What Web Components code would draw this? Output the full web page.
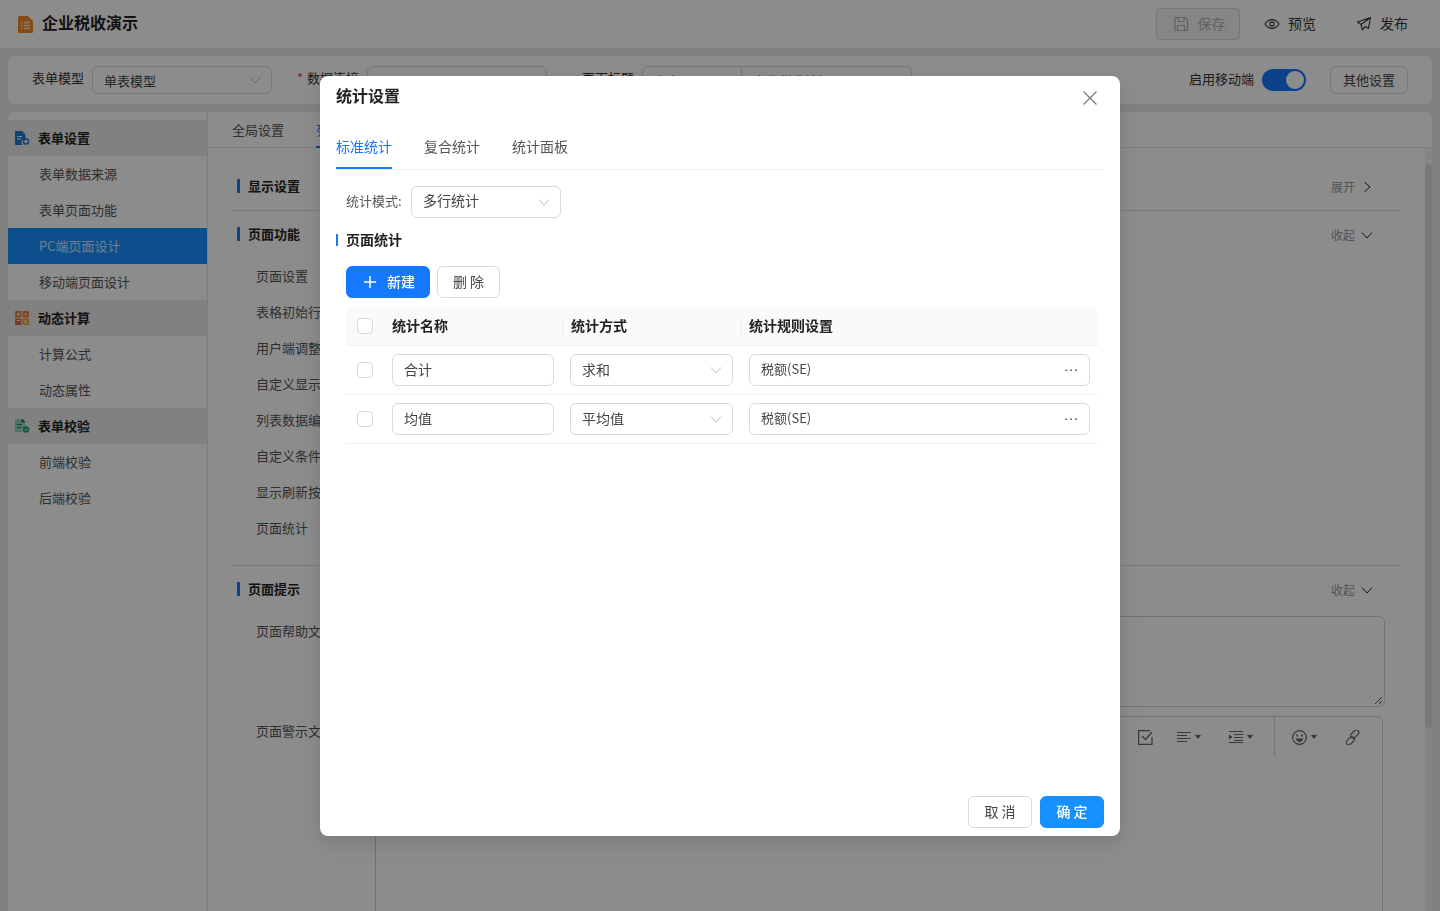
<!DOCTYPE html>
<html lang="zh-CN">
<head>
<meta charset="utf-8">
<title>统计设置</title>
<style>
  html, body { margin: 0; height: 100%; overflow: hidden; }
  body {
    background: #ebebeb;
    color: #333;
    font: 13px/20px "Noto Sans CJK SC", "Noto Sans", sans-serif;
  }
</style>
</head>
<body>
<design-page>
  <app-header slot="header" title="企业税收演示"></app-header>
  <form-toolbar slot="toolbar"></form-toolbar>
  <side-nav slot="nav">
    <nav-group label="表单设置" icon="doc"></nav-group>
    <nav-item>表单数据来源</nav-item>
    <nav-item>表单页面功能</nav-item>
    <nav-item active>PC端页面设计</nav-item>
    <nav-item>移动端页面设计</nav-item>
    <nav-group label="动态计算" icon="calc"></nav-group>
    <nav-item>计算公式</nav-item>
    <nav-item>动态属性</nav-item>
    <nav-group label="表单校验" icon="check"></nav-group>
    <nav-item>前端校验</nav-item>
    <nav-item>后端校验</nav-item>
  </side-nav>
  <design-panel slot="panel">
    <panel-section label="显示设置" toggle="展开" collapsed></panel-section>
    <panel-section label="页面功能" toggle="收起">
      <field-row>页面设置</field-row>
      <field-row>表格初始行数</field-row>
      <field-row>用户端调整列宽</field-row>
      <field-row>自定义显示列</field-row>
      <field-row>列表数据编辑</field-row>
      <field-row>自定义条件查询</field-row>
      <field-row>显示刷新按钮</field-row>
      <field-row>页面统计</field-row>
    </panel-section>
    <panel-section label="页面提示" toggle="收起" last>
      <help-editors></help-editors>
    </panel-section>
  </design-panel>
</design-page>

<stat-dialog title="统计设置">
  <stat-row name="合计" method="求和" rule="税额(SE)"></stat-row>
  <stat-row name="均值" method="平均值" rule="税额(SE)"></stat-row>
</stat-dialog>

<script>
'use strict';

const CHEVRON = `<svg width="12" height="12" viewBox="0 0 12 12" fill="none" stroke="currentColor" stroke-width="1"><path d="M1 3.500 6 9l5-5.500"/></svg>`;

class DesignPage extends HTMLElement {
  constructor() {
    super();
    this.attachShadow({ mode: 'open' }).innerHTML = `
<style>
  :host { display: flex; flex-direction: column; height: 911px; overflow: hidden; }
  .main { flex: 1; min-height: 0; display: flex; margin: 8px 8px 0; background: #fff; border-radius: 8px 8px 0 0; overflow: hidden; }
</style>
<slot name="header"></slot>
<slot name="toolbar"></slot>
<div class="main">
  <slot name="nav"></slot>
  <slot name="panel"></slot>
</div>`;
  }
}

class AppHeader extends HTMLElement {
  constructor() {
    super();
    this.attachShadow({ mode: 'open' }).innerHTML = `
<style>
  :host { display: flex; align-items: center; height: 48px; padding: 0 32px 0 18px; background: #fff; }
  svg { display: block; flex: none; }
  .title { margin: 0 0 4px 9px; font-size: 16px; font-weight: 700; color: #222; }
  .actions { margin-left: auto; display: flex; align-items: center; font-size: 14px; }
  .txt { margin-bottom: 2px; }
  .save { display: flex; align-items: center; justify-content: center; gap: 9px; box-sizing: border-box; width: 84px; height: 32px; padding-left: 2px; border: 1px solid #d9d9d9; border-radius: 4px; background: #f5f5f5; color: #b0b0b0; }
  .link { display: flex; align-items: center; gap: 8px; color: #333; }
  .preview { margin-left: 24px; }
  .publish { margin-left: 40px; }
</style>
<svg width="15" height="17" viewBox="0 0 15 17"><path fill="#f08a24" d="M1.500 0H10l5 5v10.500a1.500 1.500 0 0 1-1.500 1.500h-12A1.500 1.500 0 0 1 0 15.500v-14A1.500 1.500 0 0 1 1.500 0z"/><path stroke="#fff" stroke-opacity=".75" stroke-width="1.300" d="M3 6.500h1.500M6 6.500h6M3 9.500h1.500M6 9.500h6M3 12.500h1.500M6 12.500h6"/></svg>
<span class="title"></span>
<div class="actions">
  <span class="save">
    <svg width="16" height="16" viewBox="0 0 16 16" fill="none" stroke="currentColor" stroke-width="1.200"><path d="M2 1.500h10L14.500 4v10.500h-12.500z"/><path d="M5 1.500v4h6v-4M4.500 14.500V9.500h7v5"/></svg>
    <span class="txt">保存</span>
  </span>
  <span class="link preview">
    <svg width="16" height="16" viewBox="0 0 16 16" fill="none" stroke="#333" stroke-width="1.100"><path d="M1 8c1.800-3 4-4.400 7-4.400s5.200 1.400 7 4.400c-1.800 3-4 4.400-7 4.400S2.800 11 1 8z"/><circle cx="8" cy="8" r="2.100"/></svg>
    <span class="txt">预览</span>
  </span>
  <span class="link publish">
    <svg width="16" height="16" viewBox="0 0 16 16" fill="none" stroke="#333" stroke-width="1.100" stroke-linejoin="round"><path d="M14.500 1.500 1.500 6 5 8.500 6.500 14 9 10.500l3.500 2zM5 8.500l9.500-7"/></svg>
    <span class="txt">发布</span>
  </span>
</div>`;
  }
  connectedCallback() {
    this.shadowRoot.querySelector('.title').textContent = this.getAttribute('title');
  }
}

class UiSelect extends HTMLElement {
  constructor() {
    super();
    this.attachShadow({ mode: 'open' }).innerHTML = `
<style>
  :host { display: flex; align-items: center; justify-content: space-between; box-sizing: border-box; height: 32px; padding: 0 10px 0 11px; background: #fff; border: 1px solid #d9d9d9; border-radius: 6px; font-size: 14px; color: #444; }
  :host([small]) { height: 28px; font-size: 13px; }
  :host([dots]) { font-size: 13px; }
  .txt { margin-bottom: var(--txt-lift, 2px); }
  :host([small]) .txt { margin: 2px 0 0; }
  svg { display: block; color: #bfbfbf; flex: none; }
  :host([dots]) svg { display: none; }
  .dots { display: none; color: #333; letter-spacing: 1px; font-size: 14px; line-height: 14px; font-family: "Liberation Sans", sans-serif; margin: -9px 0 0; }
  :host([dots]) .dots { display: block; }
</style>
<span class="txt"><slot></slot></span>${CHEVRON}<span class="dots">...</span>`;
  }
}

class UiButton extends HTMLElement {
  constructor() {
    super();
    this.attachShadow({ mode: 'open' }).innerHTML = `
<style>
  :host { display: inline-flex; align-items: center; justify-content: center; box-sizing: border-box; height: 32px; padding-bottom: 2px; border: 1px solid #d9d9d9; border-radius: 6px; background: #fff; color: #444; font-size: 14px; }
  :host([size="small"]) { height: 28px; padding-bottom: 0; font-size: 13px; }
  :host([type="primary"]) { background: #1677ff; border-color: #1677ff; color: #fff; font-weight: 500; }
  :host([type="confirm"]) { background: #1890ff; border-color: #1890ff; color: #fff; font-weight: 500; }
</style>
<slot></slot>`;
  }
}

class FormToolbar extends HTMLElement {
  constructor() {
    super();
    this.attachShadow({ mode: 'open' }).innerHTML = `
<style>
  :host { display: flex; align-items: center; height: 48px; margin: 8px 8px 0; padding: 0 24px; background: #fff; border-radius: 8px; font-size: 13px; color: #333; }
  ui-select { width: 180px; }
  .lab { margin-bottom: 4px; }
  .req { color: #e5484d; margin: 0 0 4px 25px; width: 10px; }
  .lab2 { margin-left: 8px; }
  .lab3 { margin-left: 35px; }
  .pair { display: flex; margin-left: 8px; }
  .pair ui-select:first-child { width: 100px; border-radius: 6px 0 0 6px; }
  .pair ui-select:last-child { width: 170px; border-left: 0; border-radius: 0 6px 6px 0; }
  .gap { margin-left: 8px; }
  .right { margin-left: auto; display: flex; align-items: center; }
  .right .lab { margin-bottom: 2px; }
  .switch { width: 44px; height: 22px; margin: 0 24px 0 8px; border-radius: 11px; background: #1677ff; position: relative; }
  .switch::after { content: ""; position: absolute; top: 2px; right: 2px; width: 18px; height: 18px; border-radius: 50%; background: #fff; }
</style>
<span class="lab">表单模型</span>
<ui-select small class="gap">单表模型</ui-select>
<span class="req">*</span><span class="lab">数据连接</span>
<ui-select small class="lab2">master</ui-select>
<span class="lab lab3">页面标题</span>
<div class="pair">
  <ui-select small>中文</ui-select>
  <ui-select small>企业税收填报</ui-select>
</div>
<div class="right">
  <span class="lab">启用移动端</span>
  <span class="switch"></span>
  <ui-button size="small" style="width:78px">其他设置</ui-button>
</div>`;
  }
}

class SideNav extends HTMLElement {
  constructor() {
    super();
    this.attachShadow({ mode: 'open' }).innerHTML = `
<style>
  :host { display: block; flex: none; box-sizing: border-box; width: 200px; padding-top: 8px; border-right: 1px solid #e5e5e5; }
</style>
<slot></slot>`;
  }
}

const GROUP_ICONS = {
  doc: `<svg width="15" height="14" viewBox="0 0 15 14"><path fill="#1e78d2" d="M0 .8C0 .3.300 0 .8 0H7l3.500 3.500V8a3.500 3.500 0 0 0-3 6H.8c-.5 0-.8-.3-.8-.8z"/><path stroke="#fff" d="M2 5.500h5M2 8h4"/><circle cx="11" cy="10.500" r="2.500" fill="none" stroke="#1e78d2" stroke-width="1.400"/></svg>`,
  calc: `<svg width="14" height="14" viewBox="0 0 14 14"><rect width="6.500" height="6.500" rx=".8" fill="#e4813c"/><rect x="7.500" width="6.500" height="6.500" rx=".8" fill="#e4813c"/><rect y="7.500" width="6.500" height="6.500" rx=".8" fill="#dd6a4a"/><rect x="7.500" y="7.500" width="6.500" height="6.500" rx=".8" fill="#f09a1e"/><path stroke="#fff" d="M1.800 3.250h3M3.300 1.800v3M9.300 3.250h3M9.300 10h3M9.300 12h3M1.800 9.500l3 0"/></svg>`,
  check: `<svg width="15" height="14" viewBox="0 0 15 14"><path fill="#8fd2bd" d="M0 0h7l3 3v5a3.500 3.500 0 0 0-2.700 5H0z"/><path stroke="#14916e" d="M2 5.500h5M2 8.500h4M7 0v3h3"/><circle cx="11" cy="10.500" r="3.200" fill="#14a37c"/><path stroke="#fff" fill="none" d="m9.500 10.500 1.200 1.200 2-2"/></svg>`
};

class NavGroup extends HTMLElement {
  constructor() {
    super();
    this.attachShadow({ mode: 'open' }).innerHTML = `
<style>
  :host { display: flex; align-items: center; gap: 9px; height: 36px; padding-left: 7px; background: #ececec; font-weight: 700; color: #222; }
  .icon { display: flex; width: 14px; }
  svg { display: block; flex: none; }
</style>
<span class="icon"></span><span class="label"></span>`;
  }
  connectedCallback() {
    this.shadowRoot.querySelector('.icon').innerHTML = GROUP_ICONS[this.getAttribute('icon')];
    this.shadowRoot.querySelector('.label').textContent = this.getAttribute('label');
  }
}

class NavItem extends HTMLElement {
  constructor() {
    super();
    this.attachShadow({ mode: 'open' }).innerHTML = `
<style>
  :host { display: flex; align-items: center; height: 36px; padding-left: 31px; padding-bottom: 1px; box-sizing: border-box; color: #555; }
  :host([active]) { background: #1890ff; color: #cfe6ff; }
</style>
<slot></slot>`;
  }
}

class DesignPanel extends HTMLElement {
  constructor() {
    super();
    this.attachShadow({ mode: 'open' }).innerHTML = `
<style>
  :host { flex: 1; min-width: 0; display: flex; flex-direction: column; }
  .tabs { flex: none; display: flex; gap: 32px; box-sizing: border-box; height: 36px; padding-left: 24px; border-bottom: 1px solid #e8e8e8; color: #555; }
  .tabs span { box-sizing: border-box; height: 36px; line-height: 36px; }
  .tabs .on { color: #1677ff; border-bottom: 2px solid #1677ff; }
  .wrap { flex: 1; min-height: 0; display: flex; }
  .body { flex: 1; min-width: 0; padding: 15px 25px 0 24px; }
  .track { flex: none; width: 7px; background: #f2f2f2; }
  .thumb { margin-top: 16px; height: 564px; border-radius: 4px; background: #dcdcdf; }
</style>
<div class="tabs"><span>全局设置</span><span class="on">列表设置</span></div>
<div class="wrap">
  <div class="body"><slot></slot></div>
  <div class="track"><div class="thumb"></div></div>
</div>`;
  }
}

class PanelSection extends HTMLElement {
  constructor() {
    super();
    this.attachShadow({ mode: 'open' }).innerHTML = `
<style>
  :host { display: block; border-bottom: 1px solid #ddd; }
  :host([last]) { border-bottom: 0; }
  .head { display: flex; align-items: center; height: 45px; padding: 0 27px 0 5px; }
  :host([collapsed]) .head { height: 46px; padding-bottom: 1px; }
  .bar { width: 3px; height: 14px; background: #1677ff; margin-right: 8px; }
  .label { font-weight: 700; color: #222; }
  .toggle { margin: 2px 0 0 auto; display: flex; align-items: center; gap: 6px; font-size: 12px; color: #999; }
  .toggle svg { display: block; color: #222; }
  :host([collapsed]) .toggle svg { transform: rotate(-90deg); }
  .content { padding: 3px 0 18px; }
  :host([collapsed]) .content { display: none; }
  :host([last]) .content { padding: 0; }
</style>
<div class="head"><span class="bar"></span><span class="label"></span><span class="toggle"><span class="t"></span>${CHEVRON}</span></div>
<div class="content"><slot></slot></div>`;
  }
  connectedCallback() {
    this.shadowRoot.querySelector('.label').textContent = this.getAttribute('label');
    this.shadowRoot.querySelector('.t').textContent = this.getAttribute('toggle');
  }
}

class FieldRow extends HTMLElement {
  constructor() {
    super();
    this.attachShadow({ mode: 'open' }).innerHTML = `
<style>
  :host { display: flex; align-items: center; box-sizing: border-box; height: 36px; padding: 0 0 2px 24px; color: #555; }
</style>
<slot></slot>`;
  }
}

class HelpEditors extends HTMLElement {
  constructor() {
    super();
    this.attachShadow({ mode: 'open' }).innerHTML = `
<style>
  :host { display: grid; grid-template-columns: 143px 1fr; row-gap: 9px; margin-top: 5px; color: #555; }
  .lab { padding: 5px 0 0 24px; white-space: nowrap; overflow: hidden; }
  .area { position: relative; box-sizing: border-box; width: 1010px; height: 91px; border: 1px solid #d0d0d0; border-radius: 6px; }
  .grip { position: absolute; right: 1px; bottom: 1px; display: block; }
  .editor { box-sizing: border-box; width: 1008px; height: 400px; border: 1px solid #d0d0d0; border-radius: 6px; }
  .tools { display: flex; justify-content: flex-end; height: 40px; align-items: center; color: #666; }
  .tools svg { display: block; flex: none; }
  .caret { width: 0; height: 0; margin-left: 4px; border: 3px solid transparent; border-top: 4px solid #666; border-bottom: 0; }
  .tool { display: flex; align-items: center; }
  .sep { width: 1px; height: 40px; background: #d8d8d8; }
</style>
<div class="lab">页面帮助文本</div>
<div class="area"><svg class="grip" width="9" height="9" viewBox="0 0 9 9" stroke="#555" fill="none"><path d="M1 8 8 1M5 8l3-3"/></svg></div>
<div class="lab">页面警示文本</div>
<div class="editor">
  <div class="tools">
    <span class="tool"><svg width="15" height="15" viewBox="0 0 15 15" fill="none" stroke="currentColor" stroke-width="1.200"><path d="M14 7v7.400H.6V.6H12"/><path d="m4 6 3.500 3.500L14 2"/></svg></span>
    <span class="tool" style="margin-left:24px"><svg width="14" height="12" viewBox="0 0 14 12" stroke="currentColor"><path d="M0 1.500h14M0 4.500h10M0 7.500h14M0 10.500h10"/></svg><i class="caret"></i></span>
    <span class="tool" style="margin-left:28px"><svg width="14" height="12" viewBox="0 0 14 12" stroke="currentColor"><path d="M0 .5h14M5 3.500h9M5 6.500h9M5 9.500h9M0 11.500h14"/><path d="M0 3.500v5l3.500-2.500z" fill="currentColor" stroke="none"/></svg><i class="caret"></i></span>
    <span class="sep" style="margin-left:21px"></span>
    <span class="tool" style="margin-left:17px"><svg width="15" height="15" viewBox="0 0 15 15" fill="none" stroke="currentColor" stroke-width="1.200"><circle cx="7.500" cy="7.500" r="6.800"/><path d="M5 4.500v2M10 4.500v2" stroke-width="1.600"/><path d="M3.800 8.500h7.400c-.4 2.200-2 3.500-3.700 3.500s-3.300-1.300-3.700-3.500z" fill="currentColor" stroke="none"/></svg><i class="caret"></i></span>
    <span class="tool" style="margin-left:28px;margin-right:22px"><svg width="15" height="15" viewBox="0 0 15 15" fill="none" stroke="currentColor" stroke-width="1.200"><rect x="7.200" y="-.6" width="5" height="9.400" rx="2.500" transform="rotate(45 9.700 4.100)"/><rect x="2.800" y="6.200" width="5" height="9.400" rx="2.500" transform="rotate(45 5.300 10.900)"/></svg></span>
  </div>
</div>`;
  }
}

class StatDialog extends HTMLElement {
  constructor() {
    super();
    this.attachShadow({ mode: 'open' }).innerHTML = `
<style>
  :host { position: fixed; inset: 0; display: flex; justify-content: center; align-items: flex-start; padding-top: 76px; background: rgba(0, 0, 0, .45); }
  .modal { box-sizing: border-box; display: flex; flex-direction: column; width: 800px; height: 760px; padding: 0 16px 8px; background: #fff; border-radius: 8px; box-shadow: 0 6px 16px rgba(0,0,0,.08), 0 9px 28px 8px rgba(0,0,0,.05); color: #333; font-size: 14px; }
  .head { flex: none; display: flex; align-items: center; justify-content: space-between; height: 47px; }
  .title { font-size: 16px; font-weight: 700; color: #222; line-height: 40px; margin-top: -9px; }
  .close { display: block; margin: -3px 6px 0 0; color: #777; }
  .tabs { flex: none; display: flex; gap: 32px; height: 46px; border-bottom: 1px solid #eee; color: #555; }
  .tabs span { box-sizing: border-box; height: 46px; line-height: 46px; }
  .tabs .on { color: #1677ff; border-bottom: 2px solid #1677ff; }
  .body { flex: 1; min-height: 0; padding-left: 10px; }
  .mode { display: flex; align-items: center; margin-top: 16px; font-size: 13px; color: #555; }
  .mode span { flex: none; width: 65px; margin-bottom: 2px; }
  .mode ui-select { width: 150px; --txt-lift: 4px; }
  .sect { position: relative; margin: 12px 0 0 -10px; padding-left: 10px; font-weight: 700; color: #222; height: 20px; line-height: 18px; }
  .sect::before { content: ""; position: absolute; left: 0; top: 4px; width: 2px; height: 12px; background: #1677ff; }
  .btns { display: flex; gap: 7px; margin-top: 16px; }
  .add { width: 84px; gap: 10px; padding-left: 2px; }
  .add svg { display: block; margin-top: 2px; }
  .del { width: 63px; }
  .thead { display: grid; grid-template-columns: 38px 178px 179px 1fr; align-items: center; box-sizing: border-box; height: 39px; margin: 9px 6px 0 0; padding-bottom: 3px; background: #fafafa; border-bottom: 1px solid #f0f0f0; border-radius: 8px 8px 0 0; font-weight: 700; color: #222; }
  .thead > div { padding-left: 8px; position: relative; }
  .thead > div:nth-child(3) { padding-left: 9px; }
  .thead > div + div + div::before { content: ""; position: absolute; left: 0; top: 1px; width: 1px; height: 22px; background: #eee; }
  .check { box-sizing: border-box; display: block; width: 16px; height: 16px; margin: 3px 0 0 3px; background: #fff; border: 1px solid #d9d9d9; border-radius: 4px; }
  .rows { margin-right: 6px; }
  .foot { flex: none; display: flex; justify-content: flex-end; gap: 8px; height: 32px; }
  .foot ui-button { width: 64px; }
</style>
<div class="modal">
  <div class="head">
    <span class="title"></span>
    <svg class="close" width="16" height="16" viewBox="0 0 16 16" stroke="currentColor" stroke-width="1.200"><path d="m1.500 1.500 13 13M14.500 1.500l-13 13"/></svg>
  </div>
  <div class="tabs"><span class="on">标准统计</span><span>复合统计</span><span>统计面板</span></div>
  <div class="body">
    <div class="mode"><span>统计模式:</span><ui-select>多行统计</ui-select></div>
    <div class="sect">页面统计</div>
    <div class="btns">
      <ui-button class="add" type="primary"><svg width="14" height="14" viewBox="0 0 14 14" stroke="#fff" stroke-width="1.500"><path d="M1 7h12M7 1v12"/></svg>新建</ui-button>
      <ui-button class="del">删 除</ui-button>
    </div>
    <div class="thead">
      <div><span class="check"></span></div>
      <div>统计名称</div>
      <div>统计方式</div>
      <div>统计规则设置</div>
    </div>
    <div class="rows"><slot></slot></div>
  </div>
  <div class="foot">
    <ui-button>取 消</ui-button>
    <ui-button type="confirm">确 定</ui-button>
  </div>
</div>`;
  }
  connectedCallback() {
    this.shadowRoot.querySelector('.title').textContent = this.getAttribute('title');
  }
}

class StatRow extends HTMLElement {
  constructor() {
    super();
    this.attachShadow({ mode: 'open' }).innerHTML = `
<style>
  :host { display: grid; grid-template-columns: 38px 178px 179px 1fr; align-items: center; height: 48px; border-bottom: 1px solid #f0f0f0; }
  .check { box-sizing: border-box; display: block; width: 16px; height: 16px; margin-left: 11px; background: #fff; border: 1px solid #d9d9d9; border-radius: 4px; }
  .cell { padding: 0 8px; }
  .input { box-sizing: border-box; display: flex; align-items: center; height: 32px; padding: 0 11px 2px; border: 1px solid #d9d9d9; border-radius: 6px; color: #444; }
</style>
<div><span class="check"></span></div>
<div class="cell"><div class="input name"></div></div>
<div class="cell"><ui-select class="method"></ui-select></div>
<div class="cell"><ui-select dots class="rule"></ui-select></div>`;
  }
  connectedCallback() {
    this.shadowRoot.querySelector('.name').textContent = this.getAttribute('name');
    this.shadowRoot.querySelector('.method').textContent = this.getAttribute('method');
    this.shadowRoot.querySelector('.rule').textContent = this.getAttribute('rule');
  }
}

customElements.define('design-page', DesignPage);
customElements.define('app-header', AppHeader);
customElements.define('ui-select', UiSelect);
customElements.define('ui-button', UiButton);
customElements.define('form-toolbar', FormToolbar);
customElements.define('side-nav', SideNav);
customElements.define('nav-group', NavGroup);
customElements.define('nav-item', NavItem);
customElements.define('design-panel', DesignPanel);
customElements.define('panel-section', PanelSection);
customElements.define('field-row', FieldRow);
customElements.define('help-editors', HelpEditors);
customElements.define('stat-dialog', StatDialog);
customElements.define('stat-row', StatRow);
</script>
</body>
</html>
